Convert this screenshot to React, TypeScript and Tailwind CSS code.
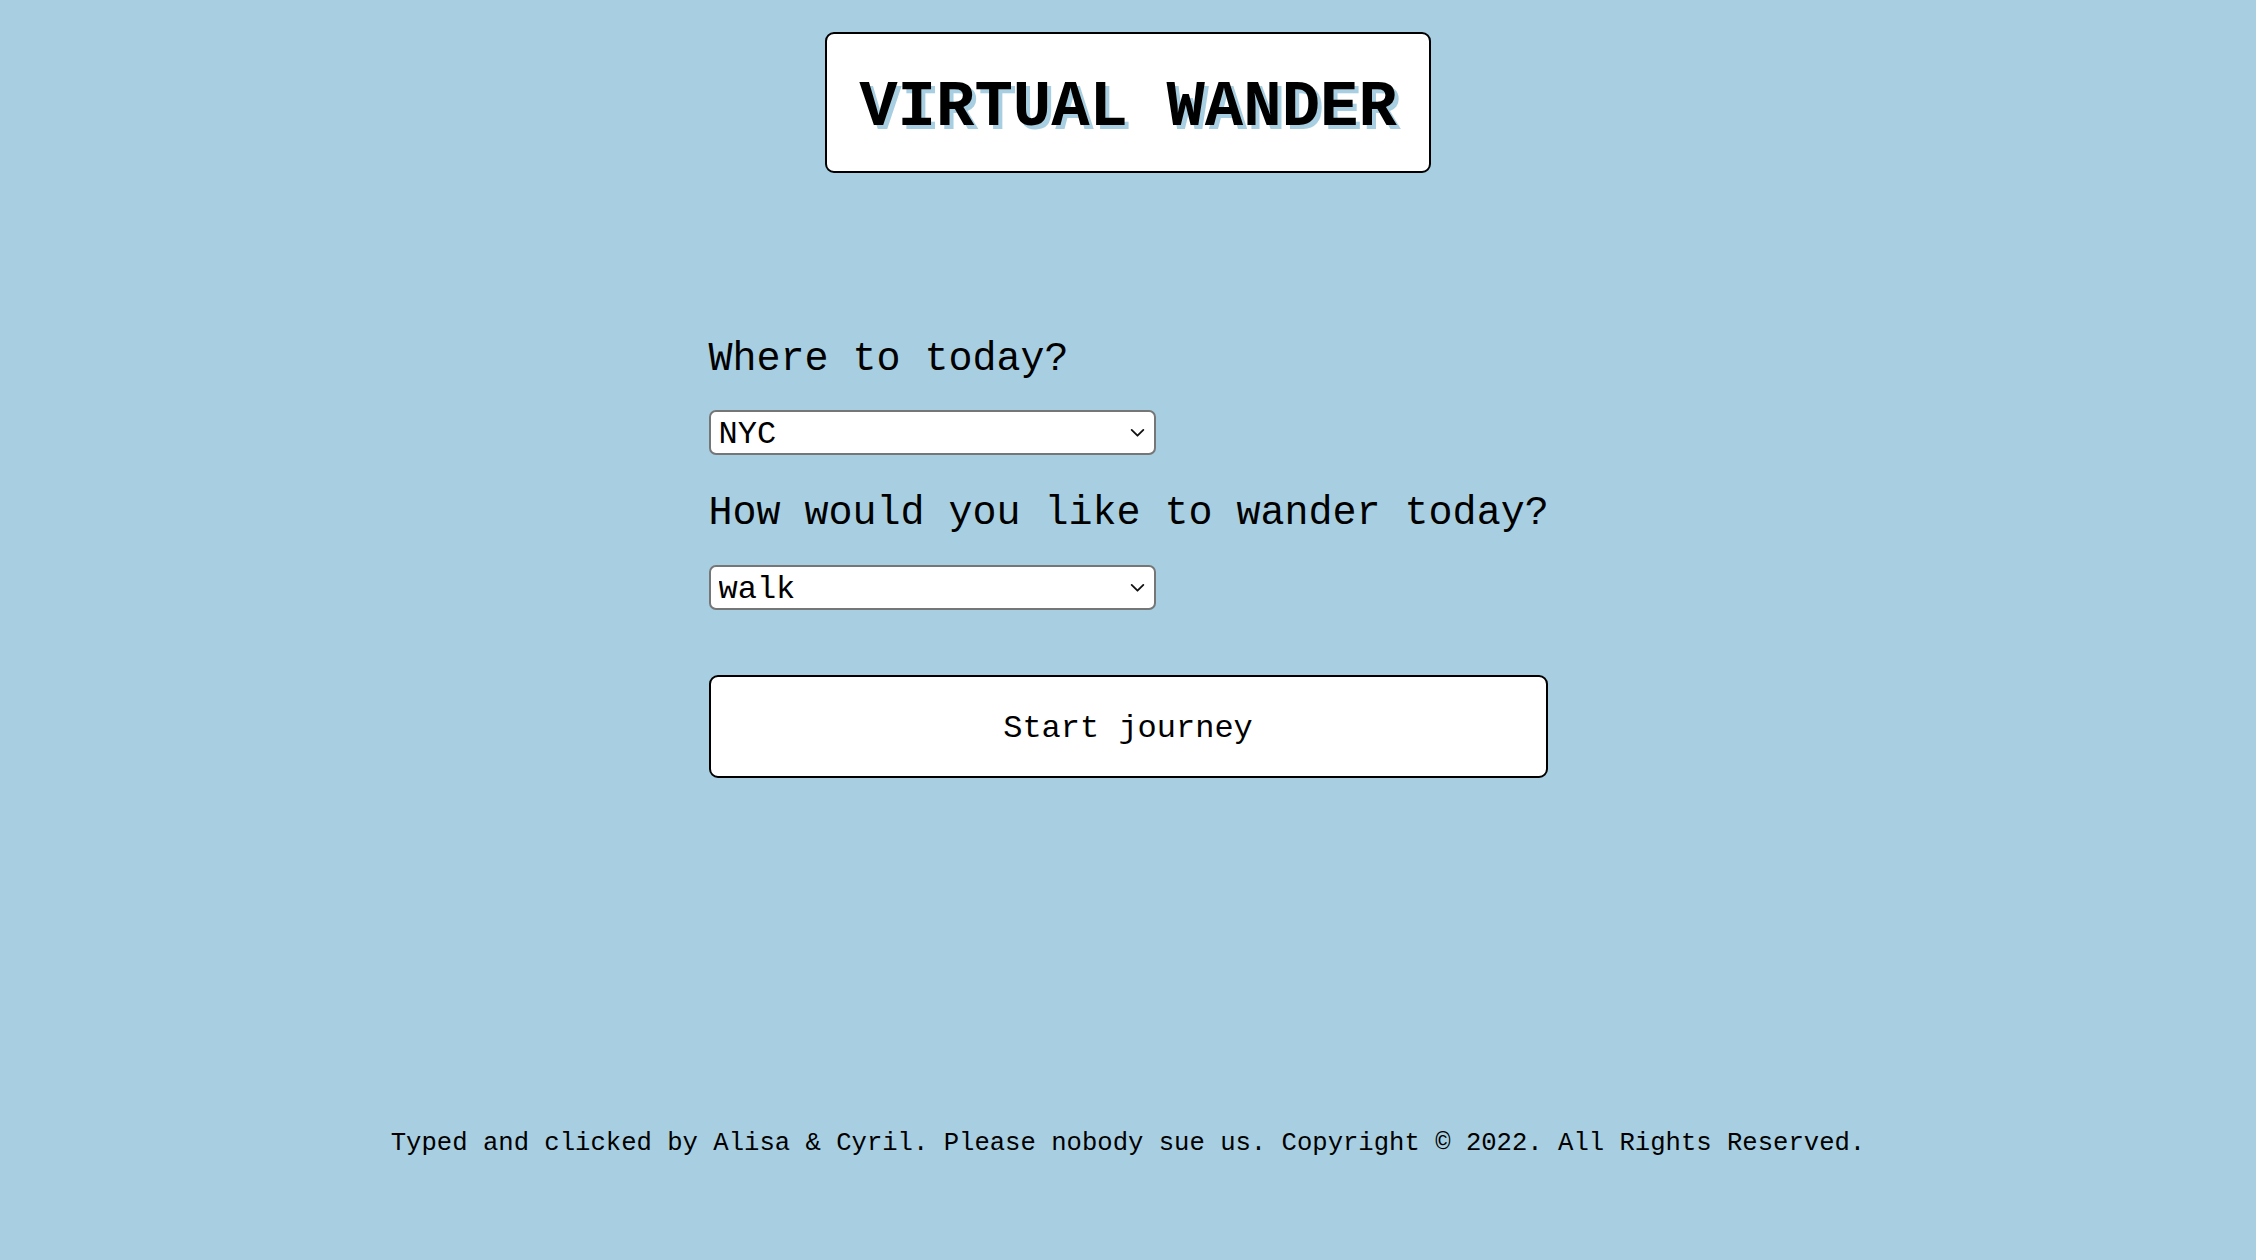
import React from "react";

const mono = { fontFamily: '"Courier New", Courier, "Nimbus Mono PS", "FreeMono", "Liberation Mono", monospace' };

function Chevron() {
  return (
    <svg width="15" height="9" viewBox="0 0 16 10" className="absolute right-[11px] top-1/2 -translate-y-1/2 pointer-events-none">
      <path d="M1.5 1.5 L8 8 L14.5 1.5" fill="none" stroke="#111" strokeWidth="2" strokeLinecap="round" strokeLinejoin="round" />
    </svg>
  );
}

function Select({ value, options }: { value: string; options: string[] }) {
  return (
    <div className="relative w-[447px] h-[45px]">
      <select
        defaultValue={value}
        className="appearance-none w-full h-full bg-white border-2 border-[#767676] rounded-[7px] pl-[8px] pr-[36px] pt-[4px] text-[32px] leading-none text-black outline-none"
        style={mono}
      >
        {options.map((o) => (
          <option key={o} value={o}>
            {o}
          </option>
        ))}
      </select>
      <Chevron />
    </div>
  );
}

export default function App() {
  return (
    <div className="min-h-[1260px] w-full bg-[#a7cfe1] flex flex-col items-center text-black" style={mono}>
      <div className="mt-[32px] w-[606px] h-[141px] bg-white border-2 border-black rounded-[9px] flex items-center justify-center">
        <h1
          className="text-[64px] leading-none font-bold tracking-normal mt-[11px] whitespace-nowrap"
          style={{ textShadow: "4px 4px 0 #a7cfe1" }}
        >
          VIRTUAL WANDER
        </h1>
      </div>

      <div className="mt-[167px] w-[839px] flex flex-col items-start">
        <h2 className="text-[40px] leading-none whitespace-nowrap">Where to today?</h2>
        <div className="mt-[30px]">
          <Select value="NYC" options={["NYC", "Paris", "London", "Tokyo"]} />
        </div>
        <h2 className="mt-[39px] text-[40px] leading-none whitespace-nowrap">How would you like to wander today?</h2>
        <div className="mt-[31px]">
          <Select value="walk" options={["walk", "drive", "bike"]} />
        </div>
        <button
          className="mt-[65px] w-[839px] h-[103px] bg-white border-2 border-black rounded-[9px] text-[32px] leading-none pt-[5px]"
          style={mono}
        >
          Start journey
        </button>
      </div>

      <footer className="mt-[353px] text-[25.6px] leading-none whitespace-nowrap">
        Typed and clicked by Alisa &amp; Cyril. Please nobody sue us. Copyright © 2022. All Rights Reserved.
      </footer>
    </div>
  );
}
